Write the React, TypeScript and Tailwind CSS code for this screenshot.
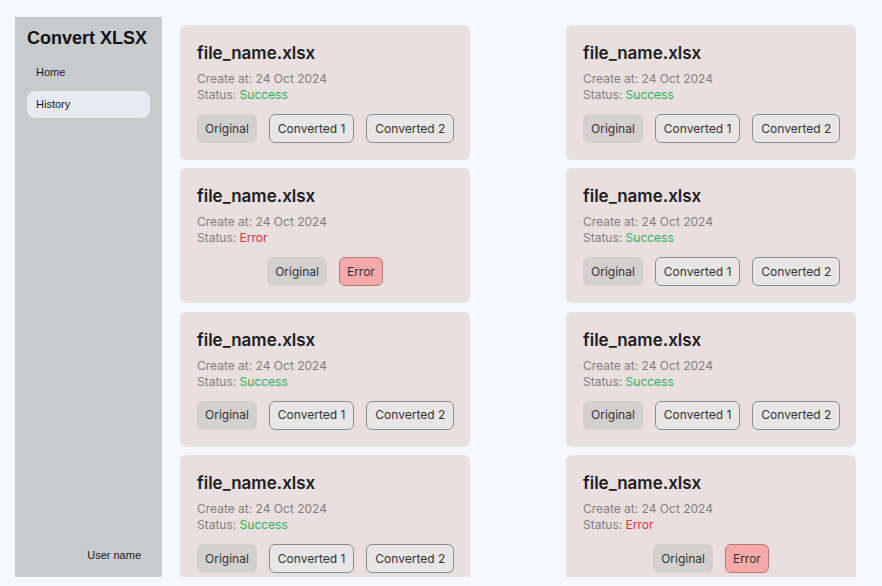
import React from 'react';

// rows of the grid, left then right
const files: boolean[] = [true, true, false, true, true, true, true, false];

function FileCard({ ok }: { ok: boolean }) {
  return (
    <div className="w-[290px] h-[135px] shrink-0 rounded-md bg-[#e9dfdf] p-[17px] font-['Inter',sans-serif]">
      <h2 className="text-[17px] leading-[22px] font-semibold text-[#1c1c1c]">file_name.xlsx</h2>
      <div className="mt-[7px] text-[12px] leading-4 text-[#808080]">
        <p>Create at: 24 Oct 2024</p>
        <p>
          Status:{' '}
          {ok ? (
            <span className="text-[#2cb05c]">Success</span>
          ) : (
            <span className="text-[#d8323f]">Error</span>
          )}
        </p>
      </div>
      <div className={`mt-[11px] flex gap-3 ${ok ? 'justify-start' : 'justify-center'}`}>
        <button className="h-[29px] px-[8px] rounded-md bg-[#d4d0d0] text-[12px] text-[#333] whitespace-nowrap">
          Original
        </button>
        {ok ? (
          <>
            <button className="h-[29px] px-[8px] rounded-md border border-[#8c8c8c] bg-[#e8e6e6] text-[12px] text-[#333] whitespace-nowrap">
              Converted 1
            </button>
            <button className="h-[29px] px-[8px] rounded-md border border-[#8c8c8c] bg-[#e8e6e6] text-[12px] text-[#333] whitespace-nowrap">
              Converted 2
            </button>
          </>
        ) : (
          <button className="h-[29px] px-[7px] rounded-md border border-[#b07878] bg-[#f8a9a9] text-[12px] text-[#333] whitespace-nowrap">
            Error
          </button>
        )}
      </div>
    </div>
  );
}

export default function App() {
  return (
    <div className="w-[882px] h-[586px] bg-[#f5f8fc] pt-[17px] pl-[15px] flex overflow-hidden">
      {/* Sidebar */}
      <aside className="w-[147px] h-[560px] shrink-0 bg-[#c8cbce] flex flex-col px-3 pt-[10px] pb-[14px] font-['Liberation_Sans',sans-serif]">
        <h1 className="text-[18px] leading-[22px] font-bold text-[#111]">Convert XLSX</h1>
        <nav className="mt-[10px] flex flex-col gap-[5px] text-[11px] font-medium text-[#1a1a1a]">
          <a className="h-[27px] px-[9px] flex items-center rounded-lg">Home</a>
          <a className="h-[27px] px-[9px] flex items-center rounded-lg bg-[#e6eaf3]">History</a>
        </nav>
        <div className="mt-auto text-right pr-[9px] text-[11px] font-medium text-[#1a1a1a]">User name</div>
      </aside>

      {/* Main */}
      <main className="flex-1 h-[560px] overflow-hidden pl-[18px] pr-[26px] pt-[8px]">
        <div className="grid grid-cols-[290px_290px] justify-between gap-y-[8.4px]">
          {files.map((ok, i) => (
            <FileCard key={i} ok={ok} />
          ))}
        </div>
      </main>
    </div>
  );
}
